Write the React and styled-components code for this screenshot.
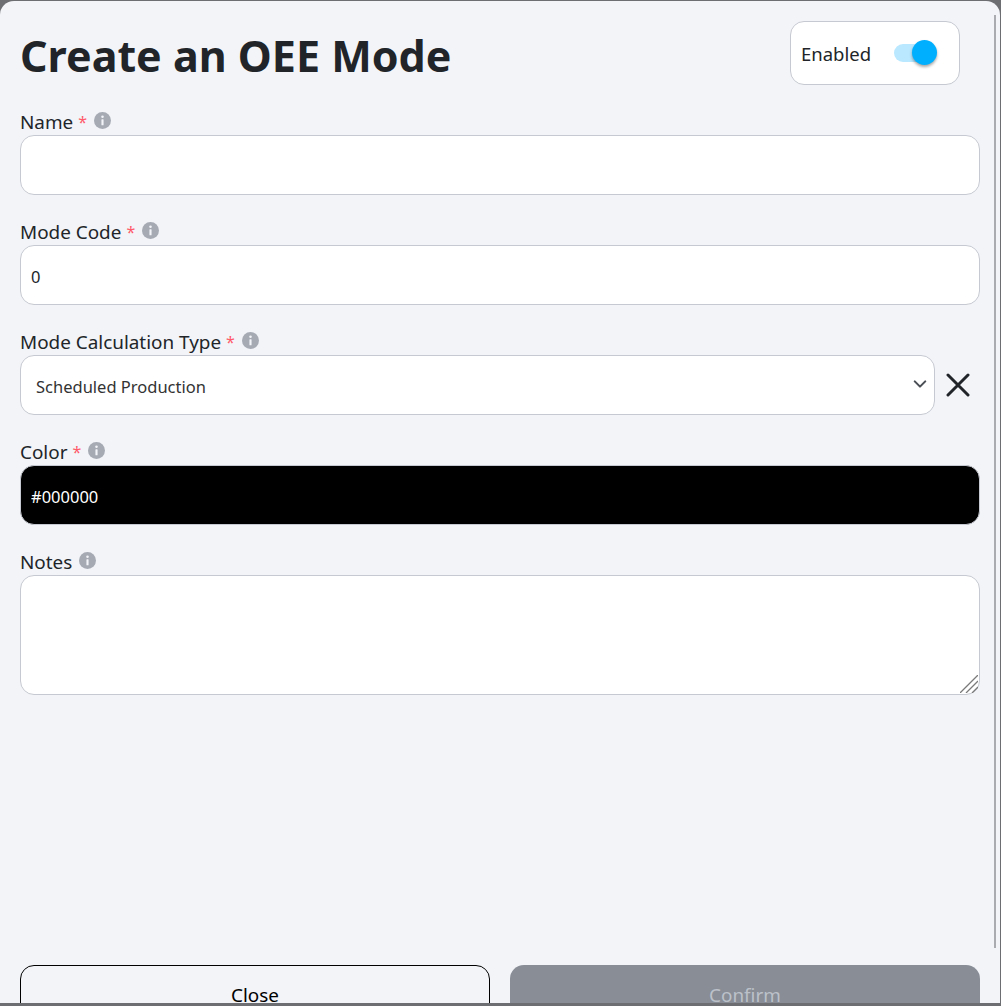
import React from 'react';
import styled, { createGlobalStyle } from 'styled-components';

const GlobalStyle = createGlobalStyle`
  html, body {
    margin: 0;
    height: 100%;
    background: #6c6e72;
    overflow: hidden;
  }
  * { box-sizing: border-box; }
`;

function InfoIcon() {
  return (
    <InfoMark viewBox="0 0 16 16" aria-hidden="true">
      <circle cx="8" cy="8" r="8" fill="#a6aab3" />
      <circle cx="8" cy="4.4" r="1.2" fill="#f2f4f8" />
      <rect x="7" y="6.8" width="2" height="5.6" rx="0.5" fill="#f2f4f8" />
    </InfoMark>
  );
}

function FieldLabel({ text, required }) {
  return (
    <Label>
      {text}
      {required && <Star>*</Star>}
      <InfoIcon />
    </Label>
  );
}

function App() {
  return (
    <>
      <GlobalStyle />
      <Modal>
        <Header>
          <Title>Create an OEE Mode</Title>
          <EnabledCard>
            Enabled
            <SwitchTrack>
              <SwitchThumb />
            </SwitchTrack>
          </EnabledCard>
        </Header>

        <Field>
          <FieldLabel text="Name" required />
          <TextInput type="text" />
        </Field>

        <Field>
          <FieldLabel text="Mode Code" required />
          <TextInput type="text" defaultValue="0" />
        </Field>

        <Field>
          <FieldLabel text="Mode Calculation Type" required />
          <SelectRow>
            <SelectWrap>
              <Select defaultValue="scheduled">
                <option value="scheduled">Scheduled Production</option>
              </Select>
              <Chevron viewBox="0 0 16 16" aria-hidden="true">
                <path d="M2 5l6 6 6-6" fill="none" stroke="#4a4f55" strokeWidth="2.4" strokeLinecap="round" strokeLinejoin="round" />
              </Chevron>
            </SelectWrap>
            <ClearIcon viewBox="0 0 24 24" aria-hidden="true">
              <path d="M2 2l20 20M22 2L2 22" fill="none" stroke="#212529" strokeWidth="3" strokeLinecap="round" />
            </ClearIcon>
          </SelectRow>
        </Field>

        <Field>
          <FieldLabel text="Color" required />
          <TextInput type="text" defaultValue="#000000" $dark />
        </Field>

        <Field>
          <FieldLabel text="Notes" />
          <NotesWrap>
            <NotesArea />
            <ResizeGrip viewBox="0 0 18 18" aria-hidden="true">
              <path d="M0 18L18 0M6 18L18 6M12 18l6-6" fill="none" stroke="#7a7a7a" strokeWidth="1.3" />
            </ResizeGrip>
          </NotesWrap>
        </Field>

        <Actions>
          <CloseButton type="button">Close</CloseButton>
          <ConfirmButton type="button" disabled>Confirm</ConfirmButton>
        </Actions>

        <ScrollThumb />
      </Modal>
    </>
  );
}

const Modal = styled.div`
  position: relative;
  width: 1000px;
  height: 1002px;
  margin-top: 1px;
  padding: 20px 20px 0;
  background: #f2f4f8;
  border-radius: 14px 14px 0 0;
  overflow: hidden;
  color: #212529;
  font-family: "Noto Sans", "Open Sans", sans-serif;
`;

const Header = styled.div`
  display: flex;
  justify-content: space-between;
  height: 64px;
  margin-bottom: 20px;
  padding-right: 20px;
`;

const Title = styled.h1`
  margin: 0;
  font-size: 43px;
  line-height: 70px;
  font-weight: 700;
  letter-spacing: 0;
`;

const EnabledCard = styled.div`
  display: flex;
  align-items: center;
  gap: 23px;
  width: 170px;
  height: 64px;
  padding-left: 10px;
  background: #fff;
  border: 1px solid #c6c9d1;
  border-radius: 14px;
  font-size: 18.5px;
`;

const SwitchTrack = styled.div`
  position: relative;
  width: 36px;
  height: 18px;
  background: #b9e8ff;
  border-radius: 9px;
`;

const SwitchThumb = styled.div`
  position: absolute;
  top: -4px;
  right: -7px;
  width: 25px;
  height: 25px;
  background: #00b0ff;
  border-radius: 50%;
  box-shadow: 0 2px 3px rgba(0, 0, 0, 0.35);
`;

const Field = styled.div`
  display: flex;
  flex-direction: column;
  margin-bottom: 20px;
`;

const Label = styled.label`
  display: flex;
  align-items: flex-start;
  height: 30px;
  padding-top: 4px;
  font-size: 18.9px;
  line-height: 26px;
`;

const Star = styled.span`
  margin-left: 5px;
  color: #ff5a6a;
  font-size: 16px;
`;

const InfoMark = styled.svg`
  width: 17px;
  height: 17px;
  margin: 3px 0 0 7px;
`;

const TextInput = styled.input`
  width: 100%;
  height: 60px;
  padding: 2px 10px 0;
  background: ${(p) => (p.$dark ? '#000' : '#fff')};
  color: ${(p) => (p.$dark ? '#fff' : '#212529')};
  border: 1px solid #c6c9d1;
  border-radius: 14px;
  outline: none;
  font-family: inherit;
  font-size: 16.5px;
`;

const SelectRow = styled.div`
  display: flex;
  align-items: center;
  gap: 11px;
`;

const SelectWrap = styled.div`
  position: relative;
  width: 915px;
`;

const Select = styled.select`
  display: block;
  width: 100%;
  height: 60px;
  padding: 2px 40px 0 15px;
  background: #fff;
  color: #333;
  border: 1px solid #c6c9d1;
  border-radius: 14px;
  outline: none;
  appearance: none;
  font-family: inherit;
  font-size: 16.5px;
`;

const Chevron = styled.svg`
  position: absolute;
  top: 22px;
  right: 8px;
  width: 14px;
  height: 14px;
  pointer-events: none;
`;

const ClearIcon = styled.svg`
  width: 24px;
  height: 24px;
  flex: none;
`;

const NotesWrap = styled.div`
  position: relative;
`;

const NotesArea = styled.textarea`
  display: block;
  width: 100%;
  height: 120px;
  padding: 10px;
  background: #fff;
  border: 1px solid #c6c9d1;
  border-radius: 14px;
  outline: none;
  resize: none;
  font-family: inherit;
  font-size: 16.5px;
`;

const ResizeGrip = styled.svg`
  position: absolute;
  right: 2px;
  bottom: 2px;
  width: 18px;
  height: 18px;
  pointer-events: none;
`;

const Actions = styled.div`
  display: flex;
  gap: 20px;
  margin-top: 270px;
`;

const CloseButton = styled.button`
  width: 470px;
  height: 60px;
  flex-shrink: 0;
  background: transparent;
  color: #000;
  border: 1px solid #000;
  border-radius: 14px;
  font-family: inherit;
  font-size: 18.9px;
`;

const ConfirmButton = styled.button`
  width: 470px;
  height: 60px;
  flex-shrink: 0;
  background: #888d96;
  color: #bcc1c9;
  border: none;
  border-radius: 14px;
  font-family: inherit;
  font-size: 18.9px;
`;

const ScrollThumb = styled.div`
  position: absolute;
  top: 14px;
  right: 4px;
  width: 2px;
  height: 933px;
  background: #a9abb0;
`;

export default App;
